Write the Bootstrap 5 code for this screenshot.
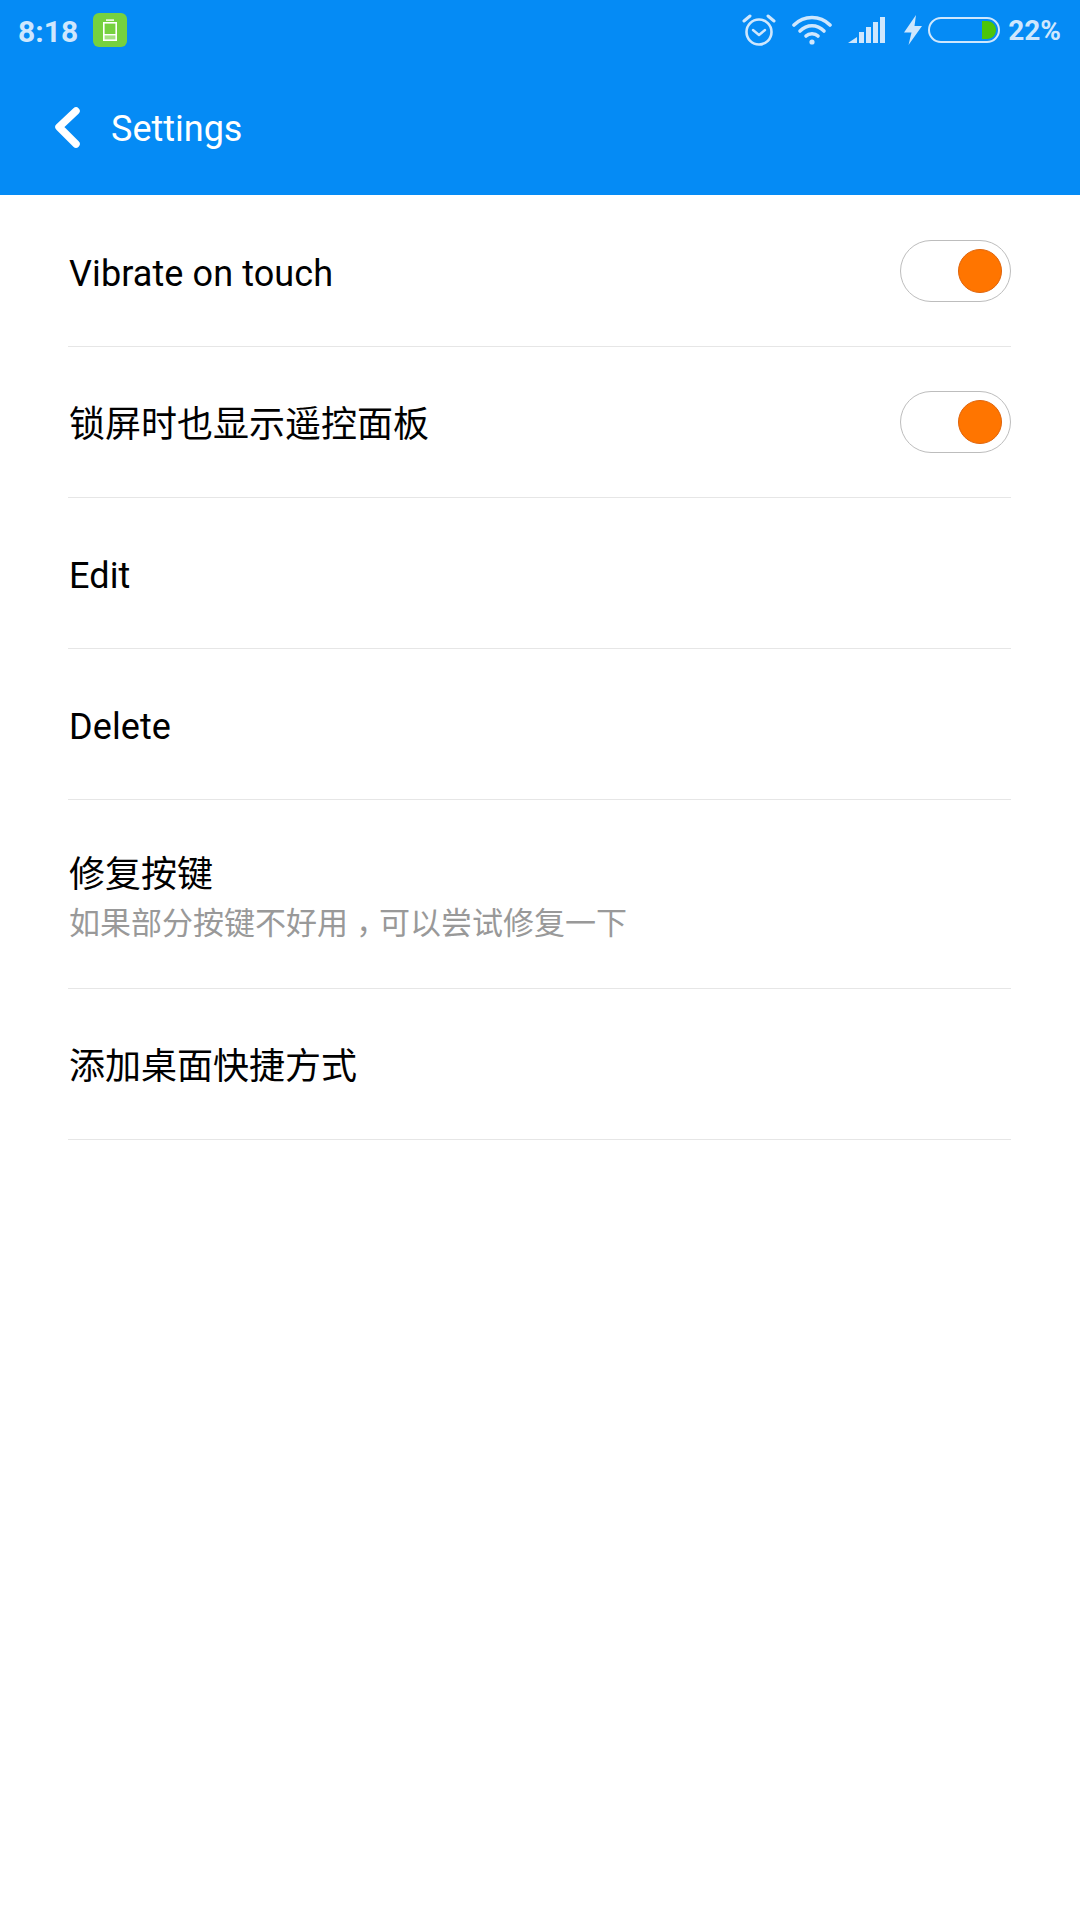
<!DOCTYPE html>
<html lang="en">
<head>
  <meta charset="UTF-8" />
  <meta name="viewport" content="width=device-width, initial-scale=1" />
  <title>Settings</title>
  <link href="https://cdn.jsdelivr.net/npm/bootstrap@5.3.3/dist/css/bootstrap.min.css" rel="stylesheet" />
  <style>
    body {
      background-color: #fff;
      font-family: Roboto, "Noto Sans CJK SC", sans-serif;
      color: #000;
    }
    .app-head {
      background-color: #058bf5;
      height: 195px;
    }
    .status-strip {
      height: 60px;
      padding: 0 19px 0 18px;
      color: #cfe7fd;
      font-size: 28px;
      font-weight: 700;
    }
    .status-strip span { margin-top: 2px; }
    .status-time { font-size: 30px; }
    .status-left { gap: 15px; }
    .status-right svg { display: block; }
    .bolt-icon { margin: 0 6px 0 18px; }
    .title-strip {
      height: 135px;
      padding: 0 0 0 51px;
      color: #fff;
      font-size: 36px;
    }
    .title-strip span { margin: 3px 0 0 28px; }
    .setting-list { padding-top: 1px; }
    .setting-row {
      margin: 0 69px 0 68px;
      height: 151px;
      border-bottom: 1px solid #e6e6e6;
      font-size: 36px;
      line-height: 1.2;
    }
    .setting-row.two-line { height: 189px; }
    .setting-text { padding: 8px 0 0 1px; }
    .latin-label { letter-spacing: .1px; }
    .setting-sub {
      color: #999;
      font-size: 31px;
      margin-top: 7px;
    }
    .comma-mark {
      font-family: "Noto Sans CJK TC", sans-serif;
      line-height: 0;
      vertical-align: -9px;
    }
    .toggle-pill {
      width: 111px;
      height: 62px;
      border: 1px solid #bdbdbd;
      border-radius: 31px;
      background: #fff;
      padding-right: 8px;
    }
    .toggle-knob {
      width: 44px;
      height: 44px;
      border-radius: 50%;
      background: #ff7500;
      border: 1px solid #e0640a;
    }
  </style>
</head>
<body>

<div class="app-head">
  <div class="status-strip d-flex justify-content-between align-items-center">
    <div class="status-left d-flex align-items-center">
      <span class="status-time">8:18</span>
      <svg width="34" height="34" viewBox="0 0 34 34">
        <rect width="34" height="34" rx="6" fill="#76d13f"/>
        <rect x="10.8" y="9.8" width="12.4" height="17.4" fill="none" stroke="#fff" stroke-width="1.6"/>
        <rect x="13" y="6.4" width="8" height="1.4" fill="#fff"/>
        <rect x="10.8" y="21" width="12.4" height="1.4" fill="#fff"/>
        <rect x="11" y="22" width="12" height="5" fill="#fff" opacity=".35"/>
      </svg>
    </div>
    <div class="status-right d-flex align-items-center">
      <svg width="34" height="34" viewBox="0 0 34 34" fill="none" stroke="#cfe7fd" stroke-width="2.6">
        <circle cx="17" cy="19" r="12.5"/>
        <path d="M11 17l6 5 6-5" stroke-width="2.4" stroke-linecap="round" stroke-linejoin="round"/>
        <path d="M2 8l6-5M32 8l-6-5" stroke-width="3" stroke-linecap="round"/>
      </svg>
      <svg class="ms-3" width="40" height="30" viewBox="0 0 40 30" fill="none" stroke="#cfe7fd" stroke-width="3.6" stroke-linecap="round">
        <path d="M2 10C12 0 28 0 38 10"/>
        <path d="M8 16C15 9 25 9 32 16"/>
        <path d="M14 21C17 18 23 18 26 21"/>
        <circle cx="20" cy="27" r="2.6" fill="#cfe7fd" stroke="none"/>
      </svg>
      <svg class="ms-3" width="38" height="26" viewBox="0 0 38 26" fill="#cfe7fd">
        <path d="M0 26L9 20V26Z"/>
        <rect x="11" y="15" width="5" height="11"/>
        <rect x="18" y="10" width="5" height="16"/>
        <rect x="25" y="5" width="5" height="21"/>
        <rect x="32" y="0" width="5" height="26"/>
      </svg>
      <svg class="bolt-icon" width="18" height="30" viewBox="0 0 18 30" fill="#cfe7fd">
        <path d="M12 0L0 17.5H7.5L4.5 30L18 11H10.5Z"/>
      </svg>
      <svg width="72" height="26" viewBox="0 0 72 26">
        <rect x="1" y="1" width="70" height="24" rx="12" fill="none" stroke="#cfe7fd" stroke-width="2"/>
        <path d="M54 4H59C64 4 68 8 68 13C68 18 64 22 59 22H54Z" fill="#4cc40a"/>
      </svg>
      <span class="ms-2">22%</span>
    </div>
  </div>
  <div class="title-strip d-flex align-items-center">
    <svg width="32" height="44" viewBox="0 0 32 44" fill="none" stroke="#fff" stroke-width="7.5" stroke-linecap="round" stroke-linejoin="round">
      <path d="M25 5L8 21L25 38"/>
    </svg>
    <span>Settings</span>
  </div>
</div>

<div class="setting-list">
  <div class="setting-row d-flex justify-content-between align-items-center">
    <div class="setting-text latin-label">Vibrate on touch</div>
    <div class="toggle-pill d-flex justify-content-end align-items-center"><div class="toggle-knob"></div></div>
  </div>
  <div class="setting-row d-flex justify-content-between align-items-center">
    <div class="setting-text">锁屏时也显示遥控面板</div>
    <div class="toggle-pill d-flex justify-content-end align-items-center"><div class="toggle-knob"></div></div>
  </div>
  <div class="setting-row d-flex align-items-center">
    <div class="setting-text latin-label">Edit</div>
  </div>
  <div class="setting-row d-flex align-items-center">
    <div class="setting-text latin-label">Delete</div>
  </div>
  <div class="setting-row two-line d-flex align-items-center">
    <div class="setting-text">
      <div>修复按键</div>
      <div class="setting-sub">如果部分按键不好用<span class="comma-mark">，</span>可以尝试修复一下</div>
    </div>
  </div>
  <div class="setting-row d-flex align-items-center">
    <div class="setting-text">添加桌面快捷方式</div>
  </div>
</div>

<script src="https://cdn.jsdelivr.net/npm/bootstrap@5.3.3/dist/js/bootstrap.bundle.min.js"></script>
</body>
</html>
